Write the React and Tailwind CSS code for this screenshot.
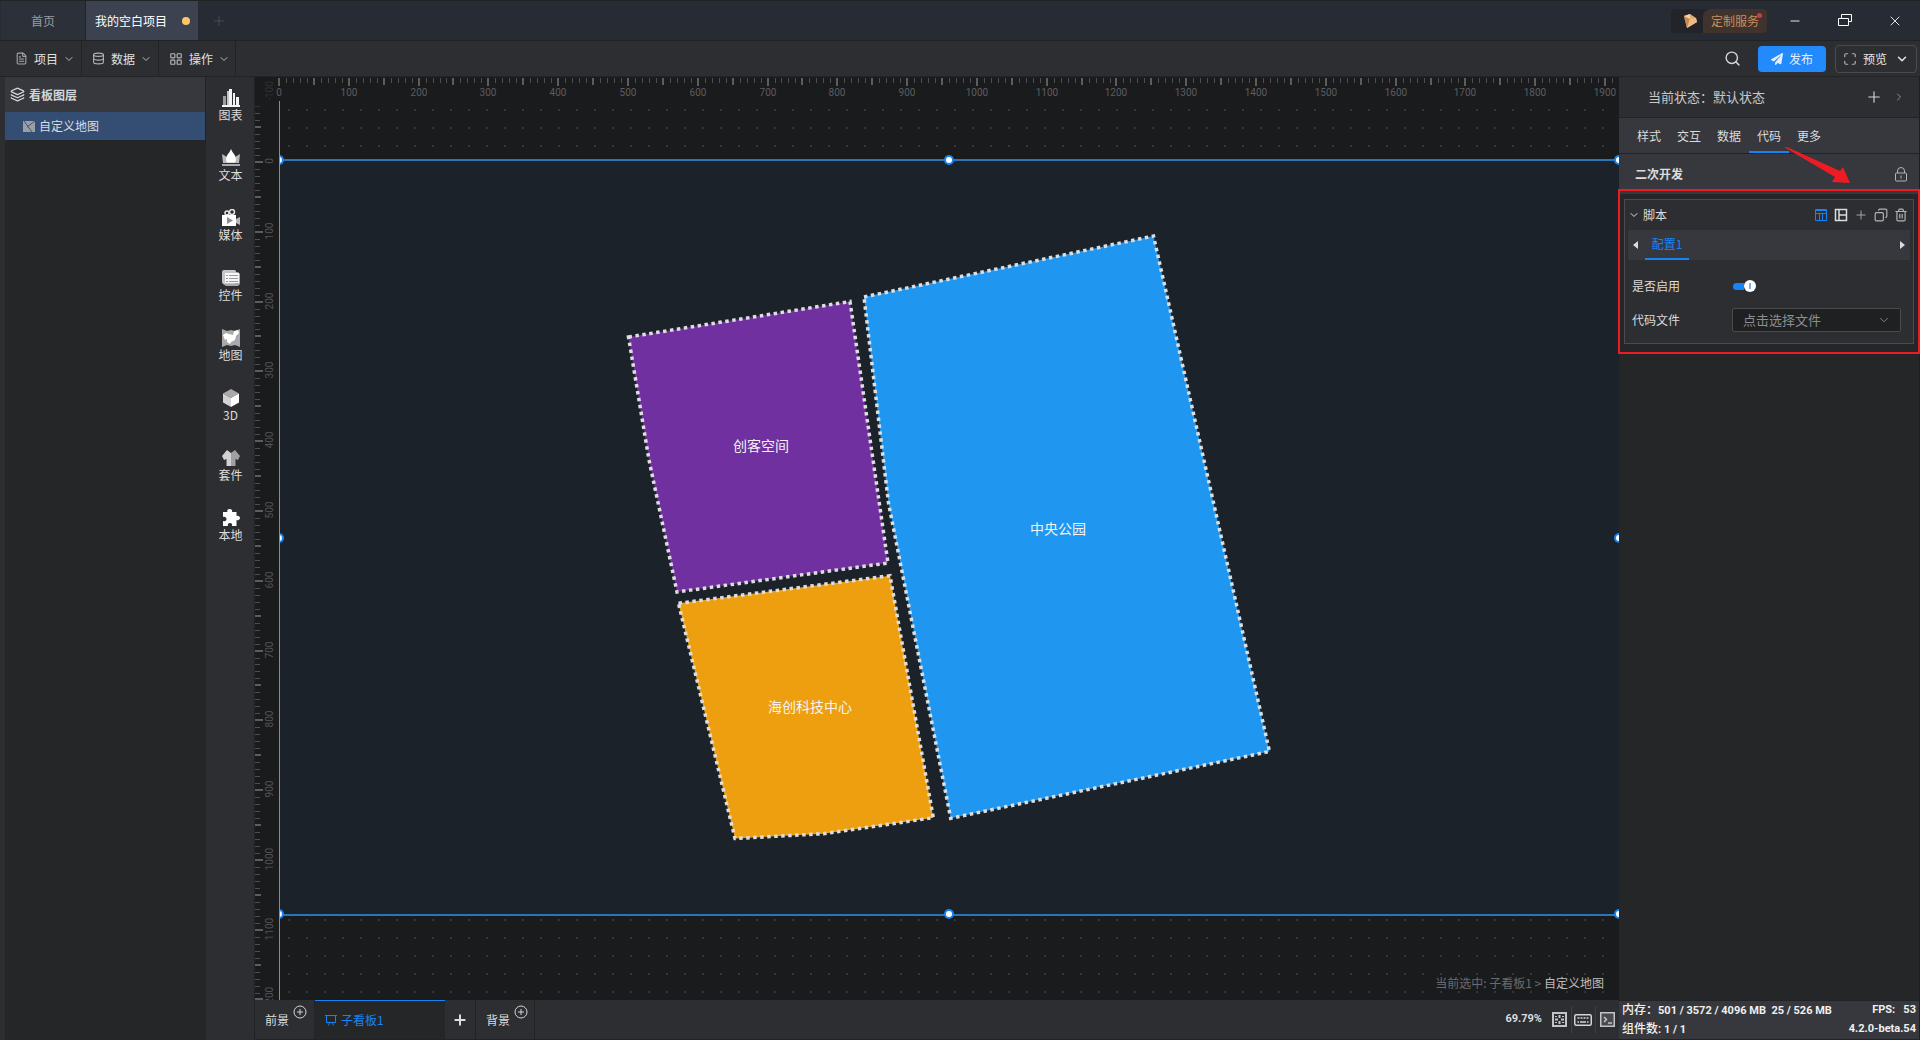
import React from "react";
import {
  ChevronDown,
  ChevronRight,
  Copy,
  FileText,
  Database,
  Layers,
  LayoutGrid,
  Maximize,
  Minus,
  Plus,
  Search,
  Trash2,
  X,
} from "lucide-react";
import { FaPaperPlane } from "react-icons/fa";

const ZOOM = 0.6979;
const TICK_UNIT = ZOOM * 10;

const regions = [
  {
    name: "创客空间",
    fill: "#70309f",
    points: "349.5,176 571,140.5 609,402 398,431 370,299",
    x: 482,
    y: 290,
  },
  {
    name: "海创科技中心",
    fill: "#ee9f10",
    points: "399.5,442.3 611,414.7 654.3,656.7 544.5,672.7 456,677.5",
    x: 531,
    y: 551,
  },
  {
    name: "中央公园",
    fill: "#1f97f1",
    points: "585,136 874.5,75 990.5,590.5 671.7,657.3 609.5,342",
    x: 779,
    y: 373,
  },
];

const toolIcons = {
  图表: (
    <>
      <path d="M1 7h3v9H1z" fill="#9c9c9e" />
      <path d="M5 2h2v14H5z" fill="#c5c5c7" />
      <path d="M7 0h3v16H7zM11 4h2v12h-2zM14 8h3v8h-3zM0 16h18v2H0z" fill="#f4f4f4" />
    </>
  ),
  文本: (
    <>
      <path d="M0 5l5 3 4-6 4 6 5-3-1 9H1z" fill="#b9b9bb" />
      <path d="M9 0l1.6 3.2c3.8 4.5 4 7.2 2.4 10.300H5C3.4 10.400 3.6 7.700 7.400 3.200z" fill="#fff" />
      <path d="M0 15h18v2H0z" fill="#a9a9ab" />
    </>
  ),
  媒体: (
    <>
      <circle cx="5" cy="4" r="2" fill="none" stroke="#e4e4e4" strokeWidth="1.5" />
      <circle cx="10" cy="3" r="2.5" fill="none" stroke="#e4e4e4" strokeWidth="1.5" />
      <path d="M0 6h14v11H0z" fill="#fff" />
      <path d="M14 10l4-2v8l-4-2z" fill="#b9b9bb" />
      <path d="M5 8l6 3.5L5 15z" fill="#8e8e91" />
    </>
  ),
  控件: (
    <>
      <path d="M2 1h11l1 2h2l2 2v10l-2 2H4l-3-2V3z" fill="#a8a8aa" />
      <rect x="0" y="1" width="14" height="14" rx="2" fill="#c5c5c7" />
      <rect x="3" y="4" width="14" height="10" fill="#f7f7f7" />
      <path d="M4 6.5h2M7 6.5h9M4 9.5h2M7 9.5h9M4 12.5h2M7 12.5h9" stroke="#9a9a9d" />
    </>
  ),
  地图: (
    <>
      <path d="M0 0l5 2 4-1 4 1 5-2v18l-5-2-4 1-4-1-5 2z" fill="#a9a9ab" />
      <path d="M1 6l3-2 3 1 4 1 1-4 4-1 1 3-3 3-1 4-4 2-1 2-3-2v-3l-2 1z" fill="#fff" />
    </>
  ),
  "3D": (
    <>
      <path d="M9 0l8 4.500L9 9 1 4.500z" fill="#a9a9ab" />
      <path d="M1 4.500L9 9v9l-8-4.500z" fill="#d2d2d4" />
      <path d="M17 4.500L9 9v9l8-4.500z" fill="#fff" />
    </>
  ),
  套件: (
    <>
      <path d="M5 1l4 3v13H4.500V10L2 11 0 7z" fill="#d2d2d4" />
      <path d="M13 1L9 4v13h4.500V10l2.500 1 2-4z" fill="#a0a0a3" />
    </>
  ),
  本地: (
    <path
      d="M1 3h4.500C4.500 1 6 0 7.500 0S11 1 10 3h4.500v4c2-.8 3.500.5 3.500 2s-1.500 2.800-3.500 2v6H10c.7-2-.5-3-2-3s-2.800 1-2 3H1v-5c2.500.8 3.500-.5 3.500-2S3 7.200 1 8z"
      fill="#fff"
    />
  ),
};

function HorizontalRuler() {
  const ticks = Array.from({ length: 192 }, (_, i) => i);
  return (
    <svg className="h-6 w-full" aria-hidden="true">
      {ticks.map((i) => {
        const x = 24 + Math.round(i * TICK_UNIT);
        const major = i % 10 === 0;
        const half = i % 5 === 0;
        return (
          <rect
            key={i}
            x={half ? x - 1 : x}
            y="1"
            width={half ? 2 : 1}
            height={major ? 8 : half ? 7 : 5}
            fill={half ? "#5f5c5c" : "#4e4e50"}
          />
        );
      })}
      {ticks
        .filter((i) => i % 10 === 0)
        .map((i) => (
          <text
            key={i}
            x={24 + Math.round(i * TICK_UNIT)}
            y="19"
            textAnchor="middle"
            fill="#5c5d60"
            className="font-['Roboto',sans-serif] text-[10px]"
          >
            {i * 10}
          </text>
        ))}
    </svg>
  );
}

function VerticalRuler() {
  const ticks = Array.from({ length: 131 }, (_, i) => i - 10);
  return (
    <svg className="block h-full w-6 overflow-visible" aria-hidden="true">
      {ticks
        .filter((i) => i > -9)
        .map((i) => {
          const y = 61 + Math.round(i * TICK_UNIT);
          const major = i % 10 === 0;
          const half = i % 5 === 0;
          return (
            <rect
              key={i}
              x="0"
              y={half ? y - 1 : y}
              width={major ? 8 : half ? 6 : 5}
              height={half ? 2 : 1}
              fill={half ? "#5f5c5c" : "#4e4e50"}
              opacity={i < -7 ? 0.5 : 1}
            />
          );
        })}
      {ticks
        .filter((i) => i % 10 === 0)
        .map((i) => {
          const y = 60 + Math.round(i * TICK_UNIT);
          return (
            <text
              key={i}
              x="18"
              y={y}
              transform={`rotate(-90 18 ${y})`}
              textAnchor="middle"
              fill={i < 0 ? "#313234" : "#545558"}
              className="font-['Roboto',sans-serif] text-[10px]"
            >
              {i * 10}
            </text>
          );
        })}
    </svg>
  );
}

function Handle({ className }) {
  return (
    <span
      className={`absolute size-1.5 -translate-x-1/2 -translate-y-1/2 rounded-full bg-white ring-2 ring-[#1684f5] ${className}`}
    />
  );
}

function Stage() {
  return (
    <div className="relative h-full overflow-hidden border-l border-[#8b8b8b] bg-[#1a1b1d] bg-[conic-gradient(from_270deg_at_2px_2px,#343537_90deg,transparent_0)] bg-size-[18px_18px] bg-position-[8px_8px]">
      <div className="absolute top-[58px] -left-px h-[757px] w-[1340px] border-y-2 border-[#2a75b8] bg-[#1b2229]">
        <svg className="absolute top-0 left-0 size-full overflow-visible">
          {regions.map((r) => (
            <g key={r.name}>
              <polygon
                points={r.points}
                fill={r.fill}
                stroke="#dedede"
                strokeWidth="3.5"
                strokeDasharray="3.5 3.5"
              />
              <text x={r.x} y={r.y} textAnchor="middle" fill="#f3f3f3" className="text-sm">
                {r.name}
              </text>
            </g>
          ))}
        </svg>
        <Handle className="-top-px left-0" />
        <Handle className="-top-px left-1/2" />
        <Handle className="-top-px left-full" />
        <Handle className="top-1/2 left-0" />
        <Handle className="top-1/2 left-full" />
        <Handle className="top-full left-0" />
        <Handle className="top-full left-1/2" />
        <Handle className="top-full left-full" />
      </div>
      <p className="absolute right-[15px] bottom-[7px] text-xs leading-5 text-[#6a6b6d]">
        当前选中: 子看板1 &gt; <span className="text-[#bcbcbd]">自定义地图</span>
      </p>
    </div>
  );
}

function TitleBar() {
  return (
    <header className="flex h-[41px] shrink-0 items-stretch border-t border-b border-[#222325] bg-[#272b34] pl-px text-xs">
      <button className="w-[85px] border-r border-[#222325] bg-[#2b3039] text-[#9a9b9e]">首页</button>
      <button className="flex w-[112px] items-center justify-between bg-[#3c4250] pr-2 pl-[9px] text-white">
        我的空白项目
        <span className="size-2 rounded-full bg-[#fdc767]" />
      </button>
      <button aria-label="新建" className="w-10 pl-[13px] text-[#4a4d54]">
        <Plus size={16} strokeWidth={1.5} />
      </button>
      <div className="ml-auto flex items-center">
        <button className="relative flex h-6 w-24 overflow-hidden rounded-sm bg-[#23242a] text-[#c68e60]">
          <span className="flex w-8 items-center justify-center pl-1.5">
            <svg width="14" height="14" viewBox="0 0 14 14" aria-hidden="true">
              <path d="M1 2l6-2 6 4 1 4-10 6z" fill="#e3aa75" />
              <path d="M1 2l6 3-3 9z" fill="#c98752" />
              <path d="M1 2l6-2 0 5z" fill="#f3cfa4" />
              <path d="M7 5l6-1 1 4-10 6z" fill="#edb985" />
            </svg>
          </span>
          <span className="flex flex-1 items-center justify-center rounded-tl-lg bg-[#40332d]">定制服务</span>
          <span className="absolute top-1 right-[5px] size-[5px] rounded-full bg-[#d9363e]" />
        </button>
        <button aria-label="最小化" className="ml-[21px] text-white">
          <Minus size={14} strokeWidth={1.5} />
        </button>
        <button aria-label="还原" className="ml-9 text-white">
          <svg width="14" height="13" fill="none" stroke="currentColor" aria-hidden="true">
            <path d="M.5 4.5h10v7H.5zM3.5 4V.5h10v7H11" />
          </svg>
        </button>
        <button aria-label="关闭" className="mr-[17px] ml-[35px] text-white">
          <X size={16} strokeWidth={1.3} />
        </button>
      </div>
    </header>
  );
}

function MenuButton({ icon, children }) {
  return (
    <button className="flex w-[77px] items-center border-r border-[#222325] pl-2.5 text-[#e0e0e0]">
      {icon}
      <span className="mr-[5px] ml-1.5">{children}</span>
      <ChevronDown size={12} strokeWidth={2} className="text-[#b8b8b9]" />
    </button>
  );
}

function ToolBar() {
  return (
    <div className="flex h-9 shrink-0 items-stretch border-b border-[#222325] bg-[#2d2e32] pl-[5px] text-xs">
      <MenuButton icon={<FileText size={13} className="text-[#a5a5a7]" />}>项目</MenuButton>
      <MenuButton icon={<Database size={13} className="text-[#b5b5b7]" />}>数据</MenuButton>
      <MenuButton icon={<LayoutGrid size={14} className="text-[#b5b5b7]" />}>操作</MenuButton>
      <div className="ml-auto flex items-center pr-[3px]">
        <button aria-label="搜索" className="mr-[17px] text-[#d8d8d8]">
          <Search size={17} strokeWidth={2} />
        </button>
        <button className="mr-[9px] flex h-[26px] w-[68px] items-center justify-center gap-1.5 rounded-sm bg-[#238afc] text-[#e4effc]">
          <FaPaperPlane size={12} />
          发布
        </button>
        <button className="flex h-7 w-[82px] items-center justify-center gap-1.5 rounded-sm border border-[#4a4b4f] text-[#e8e8e8]">
          <Maximize size={14} className="text-[#b0b0b2]" />
          预览
          <ChevronDown size={14} strokeWidth={2.5} className="ml-0.5" />
        </button>
      </div>
    </div>
  );
}

function LayerPanel() {
  return (
    <aside className="ml-[5px] flex w-[201px] shrink-0 flex-col border-r border-[#222325] bg-[#242628] text-xs">
      <h2 className="flex h-[35px] items-center gap-1 bg-[#37383d] pl-[5px] font-bold text-[#d6d6d6]">
        <Layers size={15} strokeWidth={2} />
        看板图层
      </h2>
      <button className="flex h-7 items-center gap-1 bg-[#344d73] pl-[18px] text-[#d9dde4]">
        <svg width="12" height="11" aria-hidden="true">
          <rect width="12" height="11" fill="#9b9fa5" />
          <path d="M1 0l8 11M12 0L4 6" stroke="#3f5474" fill="none" />
        </svg>
        自定义地图
      </button>
    </aside>
  );
}

function ToolColumn() {
  return (
    <nav className="w-12 shrink-0 bg-[#2d2e32] pt-3">
      {Object.entries(toolIcons).map(([label, icon]) => (
        <button
          key={label}
          className="flex h-[60px] w-full flex-col items-center pl-px text-xs leading-4 text-[#dcdcdc]"
        >
          <svg width="18" height="18" aria-hidden="true">
            {icon}
          </svg>
          {label}
        </button>
      ))}
    </nav>
  );
}

function CirclePlus() {
  return (
    <svg width="14" height="14" fill="none" stroke="#d6d6d6" className="mb-4" aria-hidden="true">
      <circle cx="7" cy="7" r="6" />
      <path d="M4 7h6M7 4v6" />
    </svg>
  );
}

function BoardBar() {
  return (
    <div className="flex h-10 shrink-0 items-stretch border-b border-[#222325] bg-[#2d2e32] text-xs text-[#dcdcdc]">
      <button className="flex w-[60px] items-center gap-1 border-r border-[#222325] pl-2.5">
        前景
        <CirclePlus />
      </button>
      <button className="flex w-[130px] items-center gap-1 border-t border-[#1684f5] bg-[#242628] pl-[10px] text-[#1684f5]">
        <svg width="12" height="12" fill="none" stroke="currentColor" aria-hidden="true">
          <path d="M0 1.5h12M1.5 1.5v7h9v-7M4.500 9l-1 2.500M7.500 9l1 2.500" />
        </svg>
        子看板1
      </button>
      <button aria-label="添加看板" className="flex w-[31px] items-center justify-center border-r border-[#222325]">
        <Plus size={16} strokeWidth={3} />
      </button>
      <button className="flex w-[59px] items-center gap-1 border-r border-[#222325] pl-2.5">
        背景
        <CirclePlus />
      </button>
      <div className="ml-auto flex items-center pr-1">
        <span className="mr-2.5 font-['Roboto',sans-serif] text-[11px] font-bold">69.79%</span>
        <button aria-label="适应画布">
          <svg width="15" height="15" fill="none" stroke="#c4c4c6" aria-hidden="true">
            <rect x="1" y="1" width="13" height="13" strokeWidth="2" />
            <path d="M7.500 3v3M7.500 9v3M3 7.500h3M9 7.500h3" strokeWidth="2" />
            <path d="M3 4.500h2M10 4.500h2M3 10.500h2M10 10.500h2" />
          </svg>
        </button>
        <span className="mr-0.5 ml-1 h-7 w-px bg-[#3e3f43]" />
        <button aria-label="快捷键">
          <svg width="18" height="12" fill="none" stroke="#d4d4d4" strokeWidth="1.5" aria-hidden="true">
            <rect x=".75" y=".75" width="16.5" height="10.5" rx="1.5" />
            <path d="M3.500 4h11" strokeDasharray="2 1" />
            <path d="M3.500 8h1.500M6 8h6M13 8h1.500" />
          </svg>
        </button>
        <span className="mr-1 ml-[3px] h-7 w-px bg-[#3e3f43]" />
        <button aria-label="控制台">
          <svg width="15" height="15" fill="none" stroke="#c4c4c6" strokeWidth="1.5" aria-hidden="true">
            <rect x=".75" y=".75" width="13.5" height="13.5" fill="#4a4b50" />
            <path d="M4 5l2.500 2.500L4 10M8 11h4" />
          </svg>
        </button>
      </div>
    </div>
  );
}

const tabs = ["样式", "交互", "数据", "代码", "更多"];

function ScriptCard() {
  return (
    <section className="border border-[#4a4b4d] bg-[#2d2e32] px-[3px] pb-[9px] text-xs text-[#dcdcdc]">
      <div className="flex h-[30px] items-center pr-0.5">
        <button className="flex items-center gap-[3px]">
          <ChevronDown size={12} />
          脚本
        </button>
        <div className="ml-auto flex items-center gap-[6px] text-[#b4b4b6]">
          <button aria-label="表格视图" className="text-[#1684f5]">
            <svg width="14" height="14" fill="none" stroke="currentColor" aria-hidden="true">
              <path d="M1.500 1.500h11v11h-11zM1.500 5.500h11M5.500 5v7.500M8.500 5v7.500M1 2.500h12" />
            </svg>
          </button>
          <button aria-label="分栏视图">
            <svg width="14" height="14" fill="none" stroke="#dcdcdc" aria-hidden="true">
              <path d="M1.500 1.500h11v11h-11zM5 1.500v11M5 7h7.500" strokeWidth="1.5" />
            </svg>
          </button>
          <button aria-label="添加"><Plus size={14} strokeWidth={1.5} /></button>
          <button aria-label="复制"><Copy size={14} strokeWidth={2} className="rotate-90" /></button>
          <button aria-label="删除"><Trash2 size={14} strokeWidth={2} /></button>
        </div>
      </div>
      <div className="flex h-[30px] items-stretch justify-between bg-[#37383d] px-[5px]">
        <div className="flex">
          <button aria-label="上一项" className="w-3 text-[#dcdcdc]">
            <svg width="5" height="8" aria-hidden="true"><path d="M5 0v8L0 4z" fill="currentColor" /></svg>
          </button>
          <button className="w-11 border-b-2 border-[#1684f5] text-[#1684f5]">配置1</button>
        </div>
        <button aria-label="下一项" className="text-[#dcdcdc]">
          <svg width="5" height="8" aria-hidden="true"><path d="M0 0v8l5-4z" fill="currentColor" /></svg>
        </button>
      </div>
      <div className="mt-3 flex h-7 items-center pl-1">
        <label htmlFor="enabled" className="w-[101px]">是否启用</label>
        <label className="flex items-center">
          <input id="enabled" type="checkbox" role="switch" defaultChecked className="sr-only" />
          <span className="h-[7px] w-[11px] rounded-l-full bg-[#1684f5]" />
          <span className="flex size-3 items-center justify-center rounded-full bg-white">
            <span className="h-1.5 w-0.5 bg-[#6fb0f5]" />
          </span>
        </label>
      </div>
      <div className="mt-1.5 flex h-7 items-center pl-1">
        <label htmlFor="code-file" className="w-[100px]">代码文件</label>
        <div className="relative mr-[9px] flex-1">
          <select
            id="code-file"
            className="block h-6 w-full appearance-none rounded-xs border border-[#4a4b4d] bg-[#1f2022] pl-2.5 text-[13px] leading-5 text-[#8d8e90]"
          >
            <option>点击选择文件</option>
          </select>
          <ChevronDown size={14} strokeWidth={1.5} className="pointer-events-none absolute top-[5px] right-2.5 text-[#8d8e90]" />
        </div>
      </div>
    </section>
  );
}

function PropertyPanel() {
  return (
    <aside className="flex w-[301px] shrink-0 flex-col border-r border-[#1d1e20] bg-[#242628]">
      <div className="flex h-[41px] items-center border-b border-[#222325] bg-[#2d2e32] pr-3.5 pl-[29px] text-[13px] text-[#c8c8c9]">
        当前状态：默认状态
        <button aria-label="添加状态" className="ml-auto text-[#d6d6d6]">
          <Plus size={18} strokeWidth={1.5} />
        </button>
        <button aria-label="展开" className="ml-2.5 text-[#8f9092]">
          <ChevronRight size={12} />
        </button>
      </div>
      <div className="relative flex h-9 items-stretch border-b border-[#222325] bg-[#37383d] pl-[10px] text-xs text-[#dcdcdc]">
        {tabs.map((t) => (
          <button
            key={t}
            className={
              t === "代码"
                ? "w-10 border-y-2 border-t-transparent border-b-[#1684f5]"
                : "w-10"
            }
          >
            {t}
          </button>
        ))}
        <svg width="68" height="40" className="absolute top-[29px] left-[165px] z-10" aria-hidden="true">
          <path d="M0 0h3l53 24 3-4 7 16-18-1 3-5z" fill="#ed1c24" />
        </svg>
      </div>
      <h3 className="flex h-10 shrink-0 items-center justify-between bg-[#37383d] pr-[11px] pl-4 text-xs font-bold text-[#dcdcdc]">
        二次开发
        <button aria-label="锁定" className="text-[#b4b4b6]">
          <svg width="14" height="15" fill="none" stroke="currentColor" aria-hidden="true">
            <rect x="1.5" y="6" width="11" height="8" rx="1" />
            <path d="M3.500 6V4a3.500 3.500 0 0 1 7 0v2M7 8.500v3" />
          </svg>
        </button>
      </h3>
      <div className="relative px-[5px] pt-[5px] pb-[10px]">
        <ScriptCard />
        <div className="pointer-events-none absolute -inset-x-px -top-[5px] bottom-0 border-2 border-[#ed1c24]" />
      </div>
      <footer className="mt-auto grid h-10 shrink-0 grid-cols-[auto_auto] content-between border-y border-[#222325] bg-[#37383d] px-[3px] font-['Roboto','Noto_Sans_CJK_SC',sans-serif] text-[11px] leading-[18px] font-bold whitespace-nowrap text-[#f0f0f0]">
        <span><span className="text-xs leading-[18px] font-medium">内存：</span>501 / 3572 / 4096 MB&nbsp; 25 / 526 MB</span>
        <span className="text-right">FPS:&nbsp;&nbsp; 53</span>
        <span><span className="text-xs leading-[18px] font-medium">组件数:</span> 1 / 1</span>
        <span className="text-right">4.2.0-beta.54</span>
      </footer>
    </aside>
  );
}

export default function App() {
  return (
    <div className="flex h-screen flex-col overflow-hidden bg-[#2d2e32] font-['Noto_Sans_CJK_SC',sans-serif]">
      <TitleBar />
      <ToolBar />
      <main className="flex min-h-0 flex-1">
        <LayerPanel />
        <ToolColumn />
        <div className="flex min-w-0 flex-1 flex-col border-l border-[#222325]">
          <div className="relative grid min-h-0 flex-1 grid-cols-[24px_minmax(0,1fr)] grid-rows-[24px_minmax(0,1fr)] overflow-hidden bg-[#1a1b1d]">
            <div className="col-span-2">
              <HorizontalRuler />
            </div>
            <VerticalRuler />
            <Stage />
          </div>
          <BoardBar />
        </div>
        <PropertyPanel />
      </main>
    </div>
  );
}
